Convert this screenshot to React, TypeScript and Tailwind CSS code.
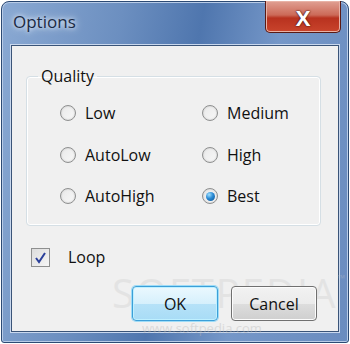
const font = { fontFamily: '"Open Sans", "Noto Sans", sans-serif' };

function Radio({ label, checked }: { label: string; checked?: boolean }) {
  return (
    <div className="flex items-center h-[20px]">
      <span className="w-[16px] h-[16px] rounded-full border border-[#8e8f8f] bg-gradient-to-br from-[#e9e9e9] to-[#f8f8f8] flex items-center justify-center shadow-[inset_0_0_2px_#c0c0c0]">
        {checked && (
          <span className="w-[9px] h-[9px] rounded-full bg-[radial-gradient(circle_at_35%_30%,#9fe0ff_0%,#2a8ad4_45%,#0b4f8f_100%)]" />
        )}
      </span>
      <span className="ml-[9px] text-[16px] leading-[20px] text-[#111]">{label}</span>
    </div>
  );
}

export default function App() {
  return (
    <div className="w-[350px] h-[344px] bg-white pt-[1px] pl-[1px]" style={font}>
      <div className="w-[348px] h-[342px] rounded-t-[8px] rounded-b-[3px] border border-[#2c4a74] bg-[linear-gradient(100deg,#8aa9d3_0%,#6c8fc0_30%,#4f76ae_50%,#7597c8_70%,#6a8cbf_100%)] flex flex-col relative shadow-[inset_0_0_0_1px_#b8cbe6]">
        {/* title bar */}
        <div className="h-[43px] flex items-start justify-between shrink-0">
          <span className="ml-[11px] mt-[9px] text-[17px] leading-[22px] text-[#1b2a44] [text-shadow:0_0_8px_#e8f0fa,0_0_4px_#e8f0fa]">
            Options
          </span>
          <div className="mr-[7px] -mt-[1px] w-[76px] h-[32px] rounded-b-[5px] border border-[#5a1a14] border-t-0 bg-[linear-gradient(180deg,#e0a093_0%,#cc6a58_45%,#b8321f_55%,#c9442c_100%)] shadow-[inset_0_0_0_1px_#e8b2a6] flex items-center justify-center">
            <span className="text-[22px] leading-none font-bold text-white [text-shadow:0_0_2px_#3a0c08,0_0_1px_#3a0c08]">
              X
            </span>
          </div>
        </div>
        {/* client */}
        <div className="ml-[9px] w-[328px] h-[287px] border border-[#3a5478] shadow-[0_0_0_1px_#c9d8ee] bg-[#f0f0f0] relative">
          <fieldset className="ml-[14px] mt-[19px] w-[295px] h-[161px] border border-[#d5dfe5] rounded-[4px] shadow-[inset_0_0_0_1px_#ffffff] p-0">
            <legend className="ml-[11px] px-[3px] text-[16px] leading-[22px] text-[#111]">Quality</legend>
            <div className="grid grid-cols-[142px_1fr] gap-y-[21.5px] pl-[33px] pt-[16px]">
              <Radio label="Low" />
              <Radio label="Medium" />
              <Radio label="AutoLow" />
              <Radio label="High" />
              <Radio label="AutoHigh" />
              <Radio label="Best" checked />
            </div>
          </fieldset>
          <div className="ml-[19px] mt-[21px] flex items-center h-[20px]">
            <span className="w-[19px] h-[19px] border border-[#8e8f8f] bg-gradient-to-br from-[#dcdcdc] to-[#f6f6f6] flex items-center justify-center">
              <svg width="13" height="13" viewBox="0 0 13 13">
                <path d="M2 7 L5 11 L11 2" fill="none" stroke="#2a3f9a" strokeWidth="2" />
              </svg>
            </span>
            <span className="ml-[18px] text-[16px] leading-[20px] text-[#111]">Loop</span>
          </div>
          <div className="absolute left-[100px] top-[227px] text-[40px] leading-none tracking-[2px] text-[#c8c8c8] opacity-30 pointer-events-none">
            SOFTPEDIA<span className="text-[10px] align-top">™</span>
          </div>
          <div className="absolute left-[130px] top-[276px] text-[13px] leading-none text-[#b8b8b8] opacity-40 pointer-events-none">
            www.softpedia.com
          </div>
          <div className="mt-[19px] ml-[120px] flex gap-[13px] relative z-10">
            <button className="w-[86px] h-[35px] rounded-[4px] border border-[#3c9fd8] shadow-[0_0_0_1px_#9edcf7,inset_0_0_0_1px_#bff0ff] bg-[linear-gradient(180deg,#ebf8fe_0%,#d6f0fc_50%,#b6e2f8_51%,#a8dcf6_100%)] text-[16px] text-[#111]">
              OK
            </button>
            <button className="w-[86px] h-[35px] rounded-[4px] border border-[#707070] shadow-[inset_0_0_0_1px_#fcfcfc] bg-[linear-gradient(180deg,#f2f2f2_0%,#ebebeb_50%,#dddddd_51%,#cfcfcf_100%)] text-[16px] text-[#111]">
              Cancel
            </button>
          </div>
        </div>
      </div>
    </div>
  );
}
